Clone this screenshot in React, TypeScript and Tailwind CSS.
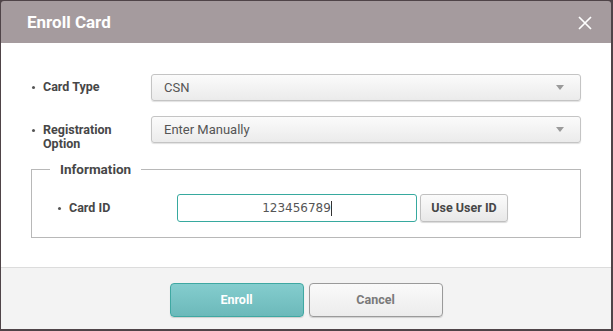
import React from 'react';

const font = { fontFamily: 'Roboto, "Liberation Sans", sans-serif' };

function Bullet() {
	return <span className="inline-block w-[3px] h-[3px] rounded-full bg-[#555] mr-[8px] shrink-0" />;
}

function Select({ value }: { value: string }) {
	return (
		<div className="flex-1 h-[27px] flex items-center justify-between pl-[12px] pr-[16px] rounded-[3px] border border-[#c4c4c4] bg-gradient-to-b from-[#fbfbfb] to-[#ebebeb] shadow-[0_1px_1px_rgba(0,0,0,0.12)]">
			<span className="text-[13px] text-[#555]">{value}</span>
			<svg width="8" height="5" viewBox="0 0 8 5">
				<path d="M0 0 H8 L4 5 Z" fill="#9a9a9a" />
			</svg>
		</div>
	);
}

export default function App() {
	return (
		<div className="w-[613px] h-[331px] bg-[#4f4448] pt-px pl-px pr-[2px] pb-[2px]" style={font}>
			<div className="h-full flex flex-col rounded-tl-[3px] rounded-tr-[3px] overflow-hidden">
				<div className="h-[42px] shrink-0 bg-[#a59b9e] flex items-center justify-between pl-[26px] pr-[19px] pt-[1px]">
					<h1 className="text-[17px] font-bold text-white">Enroll Card</h1>
					<svg width="14" height="14" viewBox="0 0 14 14">
						<path d="M1 1 L13 13 M13 1 L1 13" stroke="white" strokeWidth="1.7" />
					</svg>
				</div>

				<div className="h-[225px] shrink-0 bg-white border-b border-[#dcdcdc] pl-[30px] pr-[30px] pt-[31px]">
					<div className="flex items-center">
						<div className="w-[120px] flex items-center pl-px">
							<Bullet />
							<span className="text-[12.5px] font-bold text-[#474747]">Card Type</span>
						</div>
						<Select value="CSN" />
					</div>

					<div className="flex items-start mt-[15px]">
						<div className="w-[120px] h-[27px] flex items-start pl-px pt-[7px]">
							<span className="mt-[6px] flex">
								<Bullet />
							</span>
							<div className="flex flex-col text-[12.5px] font-bold text-[#474747] leading-[14px]">
								<span>Registration</span>
								<span>Option</span>
							</div>
						</div>
						<Select value="Enter Manually" />
					</div>

					<fieldset className="mt-[18px] border border-[#b8b8b8] pb-[15px]">
						<legend className="ml-[18px] px-[10px] text-[13.5px] font-bold text-[#474747] leading-[16px]">
							Information
						</legend>
						<div className="flex items-center mt-[17px] pl-[26px]">
							<div className="w-[119px] flex items-center">
								<Bullet />
								<span className="text-[12.5px] font-bold text-[#474747]">Card ID</span>
							</div>
							<div className="w-[240px] h-[28px] rounded-[3px] border border-[#37a99f] flex items-center justify-center">
								<span className="text-[12px] text-[#555]" style={{ fontFamily: '"DejaVu Sans", sans-serif' }}>
									123456789
								</span>
								<span className="w-px h-[15px] bg-[#333]" />
							</div>
							<button className="ml-[3px] w-[88px] h-[28px] rounded-[3px] border border-[#c0c0c0] bg-gradient-to-b from-[#fbfbfb] to-[#e8e8e8] shadow-[0_1px_1px_rgba(0,0,0,0.15)] text-[12.5px] font-bold text-[#474747]">
								Use User ID
							</button>
						</div>
					</fieldset>
				</div>

				<div className="flex-1 bg-[#f3f3f3] flex items-start justify-center gap-[5px] pt-[15px]">
					<button className="w-[134px] h-[34px] rounded-[4px] border border-[#3fa8a2] bg-gradient-to-b from-[#84cdce] to-[#6cb9ba] shadow-[0_1px_1px_rgba(0,0,0,0.15)] text-[12.5px] font-bold text-white">
						Enroll
					</button>
					<button className="w-[134px] h-[34px] rounded-[4px] border border-[#9a9a9a] bg-gradient-to-b from-[#fafafa] to-[#ececec] shadow-[0_1px_1px_rgba(0,0,0,0.15)] text-[12.5px] font-bold text-[#7a7a7a]">
						Cancel
					</button>
				</div>
			</div>
		</div>
	);
}
